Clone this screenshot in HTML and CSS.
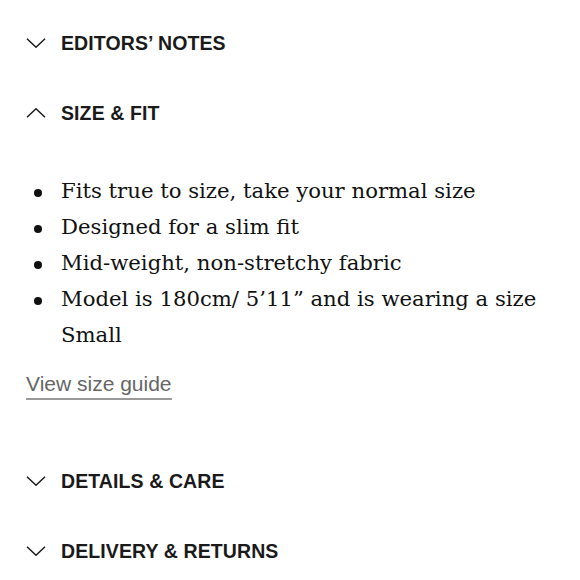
FILE: index.html
```html
<!DOCTYPE html>
<html lang="en">
<head>
<meta charset="utf-8">
<title>Product details</title>
<link rel="stylesheet" href="styles.css">
</head>
<body>
<div class="accordion">
  <div class="acc-head">
    <svg class="chev" viewBox="0 0 20 10" width="20" height="10"><path d="M1 0.8 L10 9.2 L19 0.8" /></svg>
    <span class="acc-title">EDITORS’ NOTES</span>
  </div>
  <div class="acc-head">
    <svg class="chev" viewBox="0 0 20 10" width="20" height="10"><path d="M1 9.2 L10 0.8 L19 9.2" /></svg>
    <span class="acc-title">SIZE &amp; FIT</span>
  </div>
  <div class="acc-body">
    <ul class="fit-list">
      <li>Fits true to size, take your normal size</li>
      <li>Designed for a slim fit</li>
      <li>Mid-weight, non-stretchy fabric</li>
      <li>Model is 180cm/ 5’11” and is wearing a size Small</li>
    </ul>
    <a class="size-guide" href="#">View size guide</a>
  </div>
  <div class="acc-head">
    <svg class="chev" viewBox="0 0 20 10" width="20" height="10"><path d="M1 0.8 L10 9.2 L19 0.8" /></svg>
    <span class="acc-title">DETAILS &amp; CARE</span>
  </div>
  <div class="acc-head">
    <svg class="chev" viewBox="0 0 20 10" width="20" height="10"><path d="M1 0.8 L10 9.2 L19 0.8" /></svg>
    <span class="acc-title">DELIVERY &amp; RETURNS</span>
  </div>
</div>
</body>
</html>
```

FILE: styles.css
```css
html, body {
  margin: 0;
  padding: 0;
  background: #ffffff;
}

.accordion {
  padding: 8px 12px 0 26px;
  display: flex;
  flex-direction: column;
}

.acc-head {
  height: 70px;
  display: flex;
  align-items: center;
  gap: 15px;
}

.chev {
  flex: none;
  display: block;
}

.chev path {
  fill: none;
  stroke: #1a1a1a;
  stroke-width: 1.5;
}

.acc-title {
  font-family: "Liberation Sans", Arial, sans-serif;
  font-weight: 700;
  font-size: 19.5px;
  color: #1a1a1a;
  letter-spacing: 0.1px;
}

.acc-body {
  padding: 25px 0 46px;
  display: flex;
  flex-direction: column;
  align-items: flex-start;
}

.fit-list {
  list-style: none;
  margin: 0;
  padding: 0;
  font-family: "DejaVu Serif", Georgia, serif;
  font-size: 21.2px;
  line-height: 36px;
  color: #111111;
}

.fit-list li {
  display: grid;
  grid-template-columns: 35px 1fr;
}

.fit-list li::before {
  content: "";
  width: 8px;
  height: 8px;
  border-radius: 50%;
  background: #111111;
  margin: 16px 0 0 8px;
}

.size-guide {
  margin-top: 19px;
  font-family: "Liberation Sans", Arial, sans-serif;
  font-size: 21px;
  line-height: 24px;
  color: #666666;
  text-decoration: none;
  border-bottom: 2px solid #9a9a9a;
  padding-bottom: 2px;
}
```
